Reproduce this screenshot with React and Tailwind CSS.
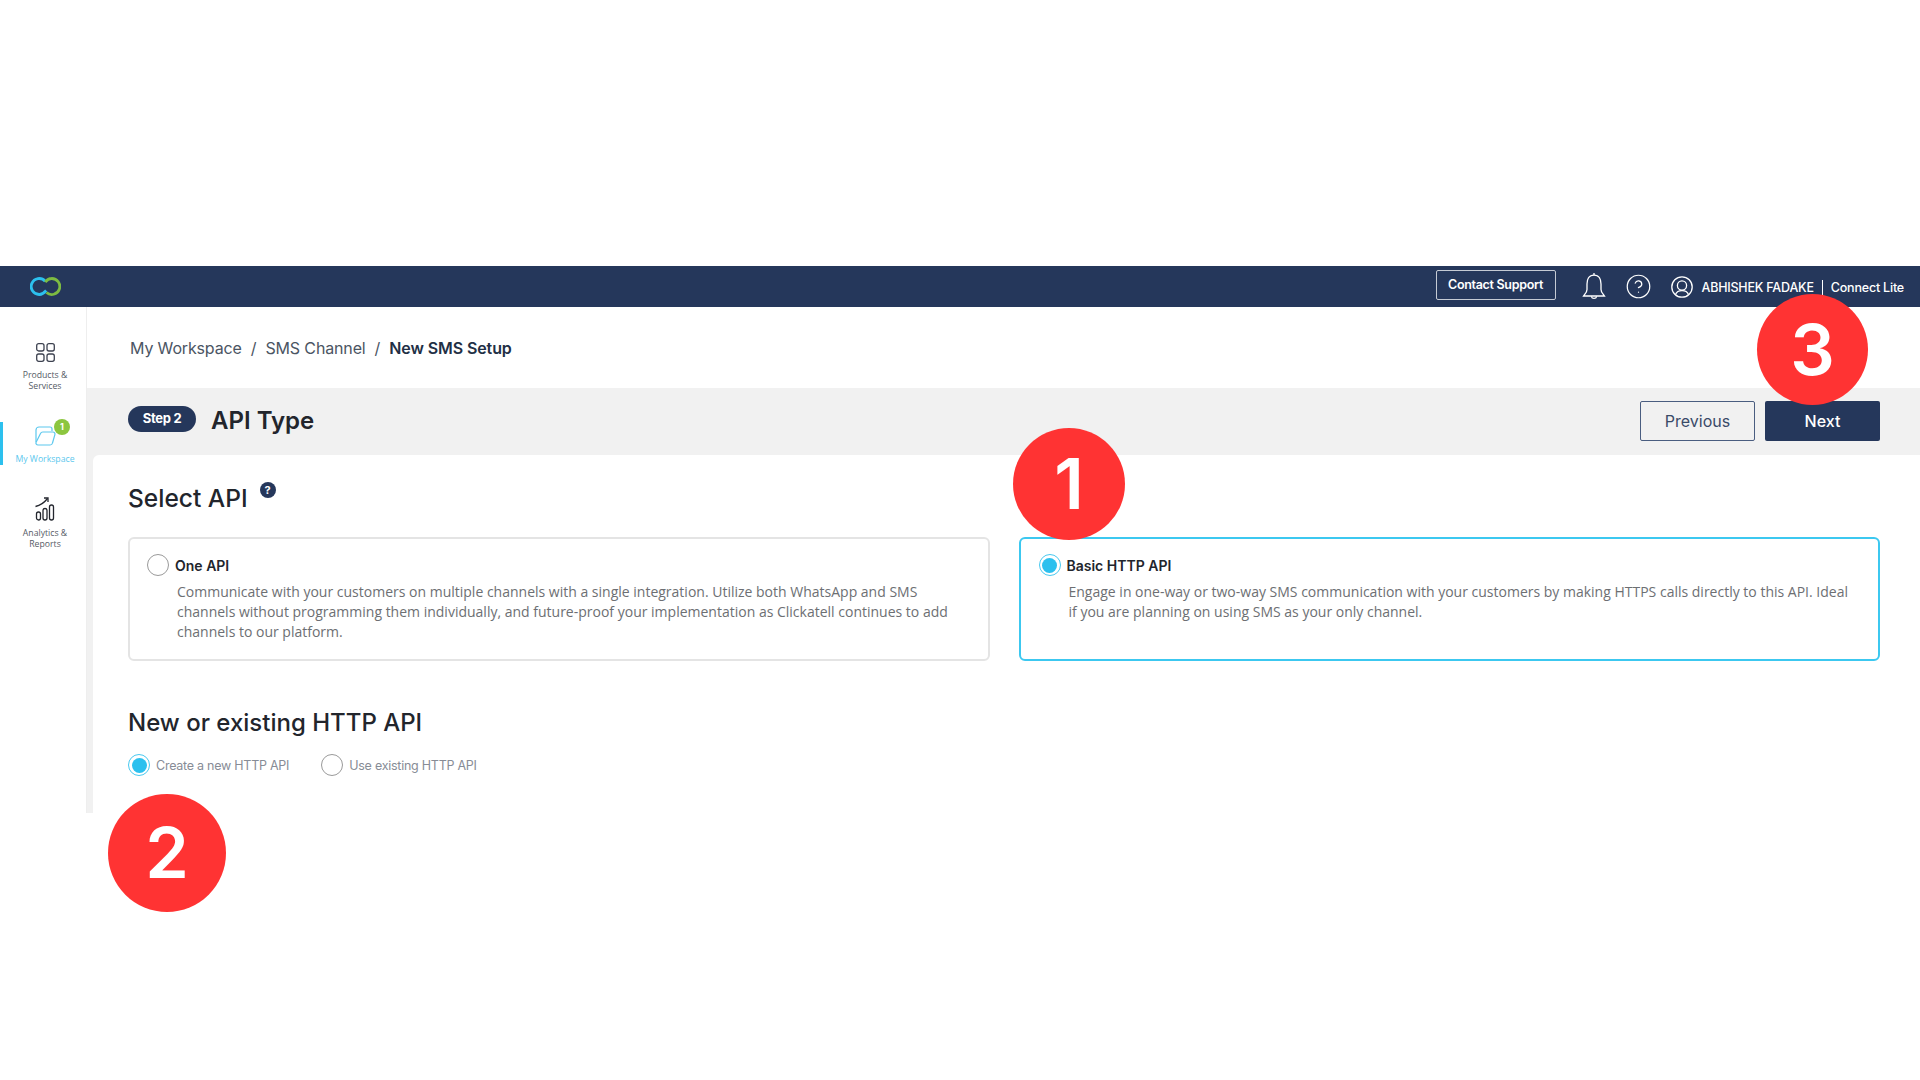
import React from 'react';
import { CircleHelp } from 'lucide-react';

const Logo = () => (
  <svg width="31" height="19" viewBox="0 0 31 19" fill="none" strokeWidth="2.800" className="shrink-0">
    <path d="M15.200 4.200A8 8 0 1 0 9.500 17.500c3 0 4.800-1.800 6.700-4" stroke="#2cc0ee" />
    <path d="M16.500 15.500a8 8 0 1 0 5-14c-2.800 0-4.700 1.600-6.300 3.500" stroke="#7dbb42" />
  </svg>
);

const BellIcon = () => (
  <svg width="24" height="28" viewBox="0 0 24 28" fill="none" stroke="#fff" strokeWidth="1.300" className="shrink-0">
    <path d="M12 3.200c-5.300 0-7 4.300-7 8.800v5.500c0 3-2.200 4.500-3.500 6.500h21c-1.300-2-3.500-3.500-3.500-6.500V12c0-4.500-1.700-8.800-7-8.800z" />
    <path d="M12 3.200V1" />
    <path d="M9.300 24.300a2.800 2.800 0 0 0 5.400 0" />
  </svg>
);

const UserIcon = () => (
  <svg width="22" height="22" viewBox="0 0 22 22" fill="none" stroke="#fff" strokeWidth="1.300" className="shrink-0">
    <circle cx="11" cy="11" r="10.200" />
    <circle cx="11" cy="9.500" r="4.600" />
    <path d="M4.500 18.600c1-2.600 3.400-3.900 6.500-3.900s5.500 1.300 6.500 3.900" />
  </svg>
);

const ProductsIcon = () => (
  <svg width="19" height="19" viewBox="0 0 19 19" fill="none" stroke="#3d4250" strokeWidth="1.300" className="shrink-0">
    <rect x="0.700" y="0.700" width="7.300" height="7.300" rx="2" />
    <rect x="11" y="0.700" width="7.300" height="7.300" rx="2" />
    <rect x="0.700" y="11" width="7.300" height="7.300" rx="2" />
    <rect x="11" y="11" width="7.300" height="7.300" rx="2" />
  </svg>
);

const WorkspaceIcon = () => (
  <svg width="21" height="20" viewBox="0 0 21 20" fill="none" stroke="#5cc8ee" strokeWidth="1.200" className="shrink-0">
    <path d="M1 16V4a3 3 0 0 1 3-3h11a2 2 0 0 1 2 2v2" />
    <path d="M5.500 7.500A2.500 2.500 0 0 1 7.800 6H18a2 2 0 0 1 1.900 2.600l-2.400 8.400A2.500 2.500 0 0 1 15 19H3a2 2 0 0 1-2-2.600z" />
  </svg>
);

const AnalyticsIcon = () => (
  <svg width="20" height="24" viewBox="0 0 20 24" fill="none" stroke="#23262e" strokeWidth="1.300" className="shrink-0">
    <rect x="1.500" y="15" width="4" height="8" rx="2" />
    <rect x="8" y="11.500" width="4" height="11.500" rx="2" />
    <rect x="14.500" y="8" width="4" height="15" rx="2" />
    <path d="M0.500 9.500C5 8.500 9 6 12.500 1.500" />
    <path d="M9 1h4v4" />
  </svg>
);

const Radio = ({ checked }) => (
  <span className={`flex h-[22px] w-[22px] shrink-0 items-center justify-center rounded-full border-[1.5px] bg-white ${checked ? 'border-[#48c9f0]' : 'border-[#9a9a9a]'}`}>
    {checked && <span className="h-[15px] w-[15px] rounded-full bg-[#2cc0ee]" />}
  </span>
);

const SideItem = ({ icon, label, active, badge, className, textClass }) => (
  <div className={`relative flex flex-col items-center pl-[4px] ${className || ''}`}>
    {icon}
    {badge && (
      <span className="absolute left-[54px] top-[-7px] flex h-4 w-4 items-center justify-center rounded-full bg-[#8cc63f] text-[9px] font-bold text-white">
        {badge}
      </span>
    )}
    <span className={`text-center font-['Open_Sans',sans-serif] text-[8.700px] leading-[11px] ${textClass || 'mt-2'} ${active ? 'text-[#5cc8ee]' : 'text-[#555b66]'}`}>
      {label}
    </span>
  </div>
);

const ApiCard = ({ title, children, selected, descClass }) => (
  <div className={`h-[124px] rounded-md border-2 bg-white pt-[15px] ${selected ? 'border-[#3cc8f0] pl-[18px]' : 'border-[#e4e4e4] pl-[17px]'}`}>
    <div className="flex items-center gap-[6px]">
      <Radio checked={selected} />
      <span className="text-[14px] font-semibold text-[#22252c]">{title}</span>
    </div>
    <p className={`mt-[6px] pl-[30px] font-['Open_Sans',sans-serif] text-[14px] leading-5 text-[#6d6f73] ${descClass}`}>
      {children}
    </p>
  </div>
);

const NumberMark = ({ n, className }) => (
  <div className={`absolute flex items-center justify-center rounded-full bg-[#ff3333] text-[70px] font-semibold leading-none text-white ${className}`}>
    {n}
  </div>
);

export default function App() {
  return (
    <div className="relative h-[1080px] w-[1920px] overflow-hidden bg-white pt-[266px] font-['Inter',sans-serif]">
      {/* Top bar */}
      <header className="flex h-[41px] items-center justify-between bg-[#25375b] pl-[30px] pr-4 text-white">
        <Logo />
        <div className="flex items-center">
          <button className="mt-[-3px] h-[30px] w-[120px] rounded-[2px] border border-[#c5cad4] text-[12.500px] font-semibold tracking-[-0.3px]">
            Contact Support
          </button>
          <span className="ml-[26px] mt-[-1px]"><BellIcon /></span>
          <CircleHelp size={27} strokeWidth={1.100} className="ml-[19px]" />
          <span className="ml-[19px]"><UserIcon /></span>
          <span className="ml-[9px] mt-[3px] text-[12.500px] font-medium tracking-[-0.2px]">ABHISHEK FADAKE</span>
          <span className="mx-2 mt-[3px] h-4 w-px bg-white" />
          <span className="mt-[3px] text-[12.500px] font-medium tracking-[-0.2px]">Connect Lite</span>
        </div>
      </header>

      <div className="flex h-[506px]">
        {/* Sidebar */}
        <aside className="relative flex w-[87px] shrink-0 flex-col border-r border-[#eeeeee] pt-9">
          <SideItem icon={<ProductsIcon />} label={<>Products &<br />Services</>} />
          <div className="relative mt-[34px]">
            <span className="absolute left-0 top-[-4px] h-[43px] w-[3px] bg-[#2cc0ee]" />
            <SideItem icon={<WorkspaceIcon />} label="My Workspace" active badge="1" />
          </div>
          <SideItem className="mt-8" textClass="mt-[7px]" icon={<AnalyticsIcon />} label={<>Analytics &<br />Reports</>} />
        </aside>

        <main className="flex min-w-0 flex-1 flex-col">
          <nav className="flex h-[81px] items-center pl-[43px] text-[16px] text-[#4b5563]">
            <span className="tracking-[-0.15px]">My Workspace</span>
            <span className="mx-[9px]">/</span>
            <span className="tracking-[-0.15px]">SMS Channel</span>
            <span className="mx-[9px]">/</span>
            <span className="font-semibold tracking-[-0.1px] text-[#222f45]">New SMS Setup</span>
          </nav>

          <div className="flex flex-1 flex-col bg-[#f1f1f1]">
            <div className="flex h-[67px] shrink-0 items-start justify-between pl-[41px] pr-10">
              <div className="flex items-center pt-[18px]">
                <span className="mb-1 flex h-[26px] w-[68px] items-center justify-center rounded-full bg-[#25375b] text-[13px] font-bold tracking-[-0.3px] text-white">
                  Step 2
                </span>
                <h1 className="ml-[15px] text-[24px] font-semibold leading-[30px] text-[#22252c]">API Type</h1>
              </div>
              <div className="flex gap-[10px] pt-[13px]">
                <button className="h-10 w-[115px] rounded-[2px] border border-[#4a5d80] text-[16px] text-[#3a4a68]">Previous</button>
                <button className="h-10 w-[115px] rounded-[2px] bg-[#25375b] text-[16px] font-medium text-white">Next</button>
              </div>
            </div>

            <section className="ml-[6px] flex-1 rounded-tl-md bg-white pl-[35px] pr-10 pt-[27px]">
              <div className="flex items-start">
                <h2 className="text-[24.500px] font-medium leading-8 text-[#22252c]">Select API</h2>
                <span className="ml-3 flex h-4 w-4 items-center justify-center rounded-full bg-[#25375b] text-[11px] font-bold leading-none text-white">?</span>
              </div>

              <div className="mt-[23px] grid grid-cols-2 gap-[29px]">
                <ApiCard title="One API" descClass="pr-[24px]">
                  Communicate with your customers on multiple channels with a single integration. Utilize both WhatsApp and SMS channels without programming them individually, and future-proof your implementation as Clickatell continues to add channels to our platform.
                </ApiCard>
                <ApiCard title="Basic HTTP API" selected descClass="pr-[20px]">
                  Engage in one-way or two-way SMS communication with your customers by making HTTPS calls directly to this API. Ideal if you are planning on using SMS as your only channel.
                </ApiCard>
              </div>

              <h2 className="mt-[46px] text-[24px] font-medium leading-8 text-[#22252c]">New or existing HTTP API</h2>
              <div className="mt-[15px] flex items-center text-[12.500px] tracking-[-0.25px] text-[#878c96]">
                <Radio checked />
                <span className="ml-[6px] mt-[2px]">Create a new HTTP API</span>
                <span className="ml-[32px]"><Radio /></span>
                <span className="ml-[6px] mt-[2px]">Use existing HTTP API</span>
              </div>
            </section>
          </div>
        </main>
      </div>

      {/* Numbered callouts */}
      <NumberMark n="1" className="left-[1013px] top-[428px] h-[112px] w-[112px]" />
      <NumberMark n="2" className="left-[108px] top-[794px] h-[118px] w-[118px]" />
      <NumberMark n="3" className="left-[1757px] top-[294px] h-[111px] w-[111px]" />
    </div>
  );
}
